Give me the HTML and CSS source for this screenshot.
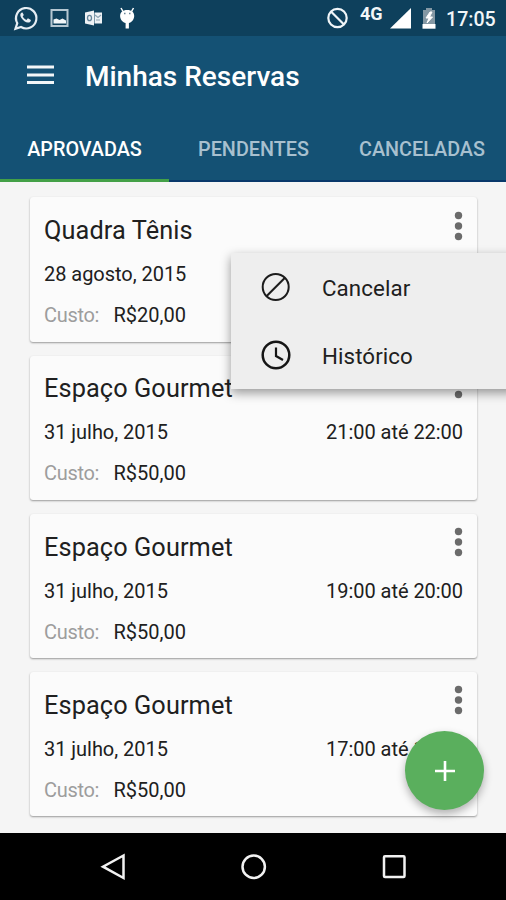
FILE: index.html
```html
<!DOCTYPE html>
<html lang="pt-BR">
<head>
<meta charset="utf-8">
<title>Minhas Reservas</title>
<link rel="stylesheet" href="styles.css">
</head>
<body>
<div class="screen">
  <header class="status">
    <svg class="status-notes" width="140" height="36" viewBox="0 0 140 36">
      <path d="M15.500 28.700l1.800-5.500A10.200 10.200 0 1 1 21 27z" fill="none" stroke="#e6edf3" stroke-width="2.200"/>
      <path d="M21.800 12.500c-2 1-1.900 3.200-.4 5.500 1.800 2.700 4.200 4.500 6.500 4.600 1.800 0 3-1.200 3-2.700l-3-1.600-1.500 1.600c-1.700-.8-2.900-2-3.700-3.500l1.100-1.400-1.300-2.500z" fill="#e6edf3"/>
      <path d="M51.500 10h16v16h-16z" fill="none" stroke="#b5c7d2" stroke-width="2"/>
      <path d="M53.500 23.500v-4l3-1 3 1.500 3-1.500 3.500 2v3z" fill="#f2f6f8"/>
      <path d="M85 12.500l9-2v15l-9-2zM94.500 12.500h7.500v11h-7.500z" fill="#eef2f5"/>
      <ellipse cx="89.500" cy="18" rx="2" ry="2.700" fill="none" stroke="#65859a" stroke-width="1.300"/>
      <path d="M95 15l3 2.500 3-2.500M96 20h4" fill="none" stroke="#8ba3b3" stroke-width="1.200"/>
      <path d="M121 8l2 3.500M133.500 8l-2 3.500" stroke="#fff" stroke-width="1.500"/>
      <path d="M127.200 10c4.500 0 7 2.300 7 6s-2.800 6.500-5.300 7v5.500h-3.300V23c-2.600-.5-5.500-3.300-5.500-7s2.600-6 7.100-6z" fill="#fff"/>
      <path d="M124 13.500h1.500M129 13.500h1.500" stroke="#678396" stroke-width="1.500"/>
    </svg>
    <svg class="status-block" width="24" height="36" viewBox="0 0 24 36">
      <circle cx="12.500" cy="18" r="9.200" fill="none" stroke="#f0f5f8" stroke-width="2.200"/>
      <path d="M6 11.500l13 13" stroke="#f0f5f8" stroke-width="2.200"/>
    </svg>
    <span class="network">4G</span>
    <svg class="status-signal" width="50" height="36" viewBox="0 0 50 36">
      <path d="M0 28.500L21 8v20.500z" fill="#fff"/>
      <path d="M33 10h3V8h6v2h3v18H33z" fill="#8498a4"/>
      <path d="M32.500 24h13v4.700h-13z" fill="#fff"/>
      <path d="M40 12l-4 6h3l-2 5 5.500-6h-3l2.500-5z" fill="#fff" stroke="#fff"/>
    </svg>
    <span class="clock">17:05</span>
  </header>

  <div class="toolbar">
    <svg class="menu-icon" width="27" height="20" viewBox="0 0 27 20">
      <path d="M0 2h27M0 10h27M0 17.500h27" stroke="#f3f6f8" stroke-width="3"/>
    </svg>
    <h1>Minhas Reservas</h1>
  </div>
  <nav class="tabs">
    <span class="tab active">APROVADAS</span>
    <span class="tab">PENDENTES</span>
    <span class="tab">CANCELADAS</span>
  </nav>

  <main class="list">
    <article class="card">
      <div class="row head"><h2>Quadra Tênis</h2><svg class="more" width="10" height="30" viewBox="0 0 10 30"><circle cx="5.500" cy="4.500" r="3.700"/><circle cx="5.500" cy="15" r="3.700"/><circle cx="5.500" cy="25.500" r="3.700"/></svg></div>
      <div class="row when"><span>28 agosto, 2015</span></div>
      <div class="row cost"><span class="label">Custo:</span><span>R$20,00</span></div>
    </article>
    <article class="card">
      <div class="row head"><h2>Espaço Gourmet</h2><svg class="more" width="10" height="30" viewBox="0 0 10 30"><circle cx="5.500" cy="4.500" r="3.700"/><circle cx="5.500" cy="15" r="3.700"/><circle cx="5.500" cy="25.500" r="3.700"/></svg></div>
      <div class="row when"><span>31 julho, 2015</span><span>21:00 até 22:00</span></div>
      <div class="row cost"><span class="label">Custo:</span><span>R$50,00</span></div>
    </article>
    <article class="card">
      <div class="row head"><h2>Espaço Gourmet</h2><svg class="more" width="10" height="30" viewBox="0 0 10 30"><circle cx="5.500" cy="4.500" r="3.700"/><circle cx="5.500" cy="15" r="3.700"/><circle cx="5.500" cy="25.500" r="3.700"/></svg></div>
      <div class="row when"><span>31 julho, 2015</span><span>19:00 até 20:00</span></div>
      <div class="row cost"><span class="label">Custo:</span><span>R$50,00</span></div>
    </article>
    <article class="card">
      <div class="row head"><h2>Espaço Gourmet</h2><svg class="more" width="10" height="30" viewBox="0 0 10 30"><circle cx="5.500" cy="4.500" r="3.700"/><circle cx="5.500" cy="15" r="3.700"/><circle cx="5.500" cy="25.500" r="3.700"/></svg></div>
      <div class="row when"><span>31 julho, 2015</span><span>17:00 até 18:00</span></div>
      <div class="row cost"><span class="label">Custo:</span><span>R$50,00</span></div>
    </article>
  </main>

  <footer class="navbar">
    <svg width="506" height="67" viewBox="0 0 506 67" fill="none" stroke="#f2f2f2" stroke-width="2.500">
      <path d="M123.500 22.500v22.500L103 33.700z"/>
      <circle cx="253.700" cy="33.700" r="11.200"/>
      <rect x="384" y="23.200" width="20.500" height="20.800" rx="1"/>
    </svg>
  </footer>

  <div class="popup">
    <div class="option">
      <svg width="32" height="32" viewBox="0 0 32 32" fill="none" stroke="#1c1c1c" stroke-width="2"><circle cx="15.700" cy="16" r="13"/><path d="M24.700 7l-18 18"/></svg>
      <span>Cancelar</span>
    </div>
    <div class="option">
      <svg width="32" height="32" viewBox="0 0 32 32" fill="none" stroke="#161616" stroke-width="2.500"><circle cx="16" cy="16" r="13.300"/><path d="M16 8.500v8.500l7 4" stroke-width="2.200"/></svg>
      <span>Histórico</span>
    </div>
  </div>
  <button class="fab" aria-label="Adicionar">
    <svg width="20" height="20" viewBox="0 0 20 20"><path d="M10 0v20M0 10h20" stroke="#fff" stroke-width="2.600"/></svg>
  </button>
</div>
</body>
</html>
```

FILE: styles.css
```css
* { box-sizing: border-box; }
body { margin: 0; font-family: Roboto, "Noto Sans", sans-serif; }
svg { display: block; flex: none; }
.screen {
  position: relative;
  display: flex;
  flex-direction: column;
  width: 506px;
  height: 900px;
  overflow: hidden;
  background: #f5f5f5;
  color: #202020;
}
.status {
  display: flex;
  height: 36px;
  flex: none;
  background: #0e405c;
  color: #f2f6f8;
  white-space: nowrap;
}
.status-block { margin-left: 185px; }
.network {
  width: 30px;
  padding-left: 11px;
  font-size: 18px;
  font-weight: 700;
  line-height: 27px;
}
.status-signal { margin-left: 11px; }
.clock {
  margin-left: 6px;
  font-size: 19.6px;
  font-weight: 500;
  line-height: 39px;
}
.toolbar {
  display: flex;
  align-items: center;
  height: 81px;
  flex: none;
  padding: 0 0 0 27px;
  background: #145174;
  color: #fff;
}
.menu-icon { margin-top: -3px; }
h1 {
  margin: 0 0 0 31px;
  font-size: 28px;
  font-weight: 500;
  line-height: 36px;
  white-space: nowrap;
}
.tabs {
  display: grid;
  grid-template-columns: 169px 169px 168px;
  grid-template-rows: 65px;
  height: 65px;
  flex: none;
  background: #145174;
}
.tab {
  height: 65px;
  border-bottom: 2px solid #08386a;
  color: #a8c0cf;
  font-size: 19.8px;
  font-weight: 500;
  line-height: 66px;
  text-align: center;
}
.tab.active { border-bottom: 3px solid #43a047; color: #fff; }
.list {
  display: flex;
  flex-direction: column;
  gap: 13.9px;
  flex: 1;
  min-height: 0;
  padding: 15.4px 29px 0 30px;
}
.card {
  height: 144.3px;
  flex: none;
  padding: 13.3px 14px 0;
  border-radius: 3px;
  background: #fbfbfb;
  box-shadow: 0 1px 2px rgba(0, 0, 0, .38);
  font-size: 20px;
}
.row { display: flex; align-items: center; white-space: nowrap; }
.head { justify-content: space-between; height: 40px; }
h2 { margin: 0; font-size: 25.3px; font-weight: 400; letter-spacing: .1px; }
.more { margin-top: -10px; fill: #6b6b6b; }
.when { justify-content: space-between; height: 47px; letter-spacing: -.04px; }
.cost { height: 35px; }
.label { width: 69.5px; color: #9d9d9d; letter-spacing: -.3px; }
.navbar { height: 67px; flex: none; background: #000; }
.popup {
  position: absolute;
  top: 253px;
  left: 231px;
  width: 285px;
  height: 136px;
  background: #eeeeee;
  box-shadow: 0 4px 10px rgba(0, 0, 0, .4);
}
.option {
  display: flex;
  align-items: center;
  gap: 30px;
  height: 68px;
  padding-left: 29px;
  font-size: 22.3px;
  letter-spacing: .1px;
}
.option span { padding-top: 1px; }
.fab {
  position: absolute;
  top: 731px;
  left: 405px;
  display: flex;
  align-items: center;
  justify-content: center;
  width: 79px;
  height: 79px;
  padding: 0;
  border: 0;
  border-radius: 50%;
  background: #5aaf5d;
  box-shadow: 0 4px 9px rgba(0, 0, 0, .3);
}
```
